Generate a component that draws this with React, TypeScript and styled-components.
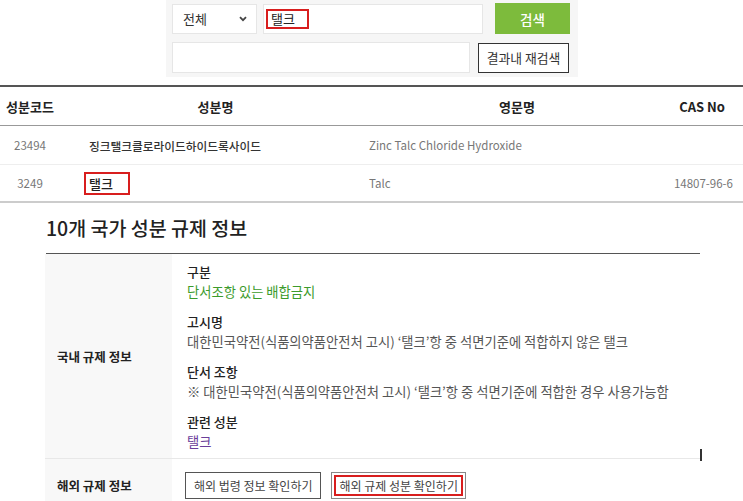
import styled, { createGlobalStyle } from 'styled-components';

const GlobalStyle = createGlobalStyle`
  body {
    margin: 0;
    background: #fff;
    font-family: 'Noto Sans CJK KR', 'Noto Sans', sans-serif;
    color: #333;
  }
`;

const Page = styled.div`
  width: 743px;
  overflow: hidden;
`;

const SearchPanel = styled.div`
  width: 412px;
  margin-left: 166px;
  background: #f6f6f6;
  padding: 3px 0 5px 6px;
  box-sizing: border-box;
  display: flex;
  flex-direction: column;
  gap: 8px;
  height: 77px;
`;

const SearchRow = styled.div`
  display: flex;
  align-items: center;
`;

const Field = styled.div<{ $w: number; $gap?: number }>`
  width: ${(p) => p.$w}px;
  height: 30px;
  margin-right: ${(p) => p.$gap ?? 0}px;
  background: #fff;
  border: 1px solid #e6e6e6;
  box-sizing: border-box;
  display: flex;
  align-items: center;
  font-size: 13px;
  color: #333;
`;

const SelectBox = styled(Field)`
  padding: 0 9px 0 10px;
  justify-content: space-between;
`;

const Mark = styled.span<{ $size?: number; $pr?: number }>`
  border: 2px solid #d81e1e;
  padding: 0 ${(p) => p.$pr ?? 12}px 0 3px;
  line-height: ${(p) => p.$size ?? 16}px;
  font-size: 13px;
  color: #222;
`;

const GreenButton = styled.button`
  width: 75px;
  height: 31px;
  border: none;
  background: #7dbb3c;
  color: #fff;
  font-family: inherit;
  font-size: 13.5px;
  font-weight: 500;
`;

const OutlineButton = styled.button`
  width: 91px;
  height: 30px;
  border: 1px solid #333;
  background: #fff;
  color: #333;
  font-family: inherit;
  font-size: 12.8px;
  padding: 0;
`;

const Table = styled.div`
  margin-top: 8px;
  border-top: 2px solid #555;
  border-bottom: 2px solid #ccc;
`;

const Row = styled.div<{ $head?: boolean; $h: number; $line?: string }>`
  display: grid;
  grid-template-columns: 60px 297px 310px 1fr;
  height: ${(p) => p.$h}px;
  align-items: center;
  border-bottom: ${(p) => (p.$line ? `1px solid ${p.$line}` : 'none')};
  font-size: ${(p) => (p.$head ? 13 : 11.5)}px;
  font-weight: ${(p) => (p.$head ? 700 : 400)};
  color: ${(p) => (p.$head ? '#222' : '#777')};
`;

const Cell = styled.div<{ $align?: string; $pl?: number; $pr?: number }>`
  text-align: ${(p) => p.$align ?? 'left'};
  padding-left: ${(p) => p.$pl ?? 0}px;
  padding-right: ${(p) => p.$pr ?? 0}px;
  white-space: nowrap;
`;

const NameCell = styled(Cell)`
  color: #333;
  font-weight: 500;
  font-size: 11.7px;
`;

const Section = styled.div`
  margin: 0 43px 0 45px;
`;

const Title = styled.h2`
  margin: 13px 0 0 1px;
  height: 24px;
  line-height: 24px;
  font-size: 19.5px;
  font-weight: 500;
  color: #222;
  padding-bottom: 13px;
  border-bottom: 1px solid #555;
`;

const InfoRow = styled.div<{ $line?: boolean }>`
  display: flex;
  border-bottom: ${(p) => (p.$line ? '1px solid #e8e8e8' : 'none')};
  position: relative;
`;

const InfoHead = styled.div`
  width: 127px;
  flex: none;
  background: #f8f8f8;
  display: flex;
  align-items: center;
  padding-left: 12px;
  box-sizing: border-box;
  font-size: 12.5px;
  font-weight: 700;
  color: #222;
`;

const InfoBody = styled.div`
  padding: 8px 0 6px 15px;
  display: flex;
  flex-direction: column;
  gap: 10px;
`;

const Block = styled.div`
  line-height: 20px;
`;

const Label = styled.div`
  font-size: 13px;
  font-weight: 500;
  color: #222;
`;

const Value = styled.div<{ $color?: string }>`
  font-size: 13.3px;
  color: ${(p) => p.$color ?? '#555'};
  white-space: nowrap;
`;

const Caret = styled.span`
  position: absolute;
  right: -2px;
  bottom: -3px;
  width: 2px;
  height: 12px;
  background: #333;
`;

const ButtonBar = styled.div`
  padding: 13px 0 0 13px;
  display: flex;
  gap: 10px;
  height: 40px;
`;

const LinkButton = styled.button`
  height: 27px;
  padding: 0 8px;
  border: 1px solid #555;
  background: #fff;
  font-family: inherit;
  font-size: 12px;
  color: #444;
`;

const MarkedButton = styled(LinkButton)`
  border-color: #888;
  padding: 2px;
  span {
    display: block;
    border: 2px solid #d81e1e;
    height: 100%;
    box-sizing: border-box;
    padding: 0 3px;
    line-height: 17px;
  }
`;

const Chevron = () => (
  <svg width="8" height="6" viewBox="0 0 8 6">
    <path d="M1 1.2 4 4.2 7 1.2" fill="none" stroke="#444" strokeWidth="1.8" />
  </svg>
);

export default function App() {
  return (
    <Page>
      <GlobalStyle />
      <SearchPanel>
        <SearchRow>
          <SelectBox $w={85} $gap={6}>
            전체
            <Chevron />
          </SelectBox>
          <Field $w={220} $gap={12} style={{ paddingLeft: 2 }}>
            <Mark>탤크</Mark>
          </Field>
          <GreenButton>검색</GreenButton>
        </SearchRow>
        <SearchRow>
          <Field $w={298} $gap={8} style={{ height: 31 }} />
          <OutlineButton>결과내 재검색</OutlineButton>
        </SearchRow>
      </SearchPanel>

      <Table>
        <Row $head $h={38} $line="#999">
          <Cell $align="center">성분코드</Cell>
          <Cell $align="center" $pl={14}>성분명</Cell>
          <Cell $align="center" $pl={10}>영문명</Cell>
          <Cell $align="right" $pr={18}>CAS No</Cell>
        </Row>
        <Row $h={38} $line="#eee">
          <Cell $align="center">23494</Cell>
          <NameCell $pl={29}>징크탤크클로라이드하이드록사이드</NameCell>
          <Cell $pl={12}>Zinc Talc Chloride Hydroxide</Cell>
          <Cell $align="right" $pr={10} />
        </Row>
        <Row $h={36}>
          <Cell $align="center">3249</Cell>
          <NameCell $pl={24}>
            <Mark $size={17} $pr={15}>탤크</Mark>
          </NameCell>
          <Cell $pl={12}>Talc</Cell>
          <Cell $align="right" $pr={10}>14807-96-6</Cell>
        </Row>
      </Table>

      <Section>
        <Title>10개 국가 성분 규제 정보</Title>
        <InfoRow $line>
          <InfoHead>국내 규제 정보</InfoHead>
          <InfoBody>
            <Block>
              <Label>구분</Label>
              <Value $color="#3c9b2c">단서조항 있는 배합금지</Value>
            </Block>
            <Block>
              <Label>고시명</Label>
              <Value>대한민국약전(식품의약품안전처 고시) ‘탤크’항 중 석면기준에 적합하지 않은 탤크</Value>
            </Block>
            <Block>
              <Label>단서 조항</Label>
              <Value>※ 대한민국약전(식품의약품안전처 고시) ‘탤크’항 중 석면기준에 적합한 경우 사용가능함</Value>
            </Block>
            <Block>
              <Label>관련 성분</Label>
              <Value $color="#6a3d9a">탤크</Value>
            </Block>
          </InfoBody>
          <Caret />
        </InfoRow>
        <InfoRow>
          <InfoHead>해외 규제 정보</InfoHead>
          <ButtonBar>
            <LinkButton>해외 법령 정보 확인하기</LinkButton>
            <MarkedButton>
              <span>해외 규제 성분 확인하기</span>
            </MarkedButton>
          </ButtonBar>
        </InfoRow>
      </Section>
    </Page>
  );
}
